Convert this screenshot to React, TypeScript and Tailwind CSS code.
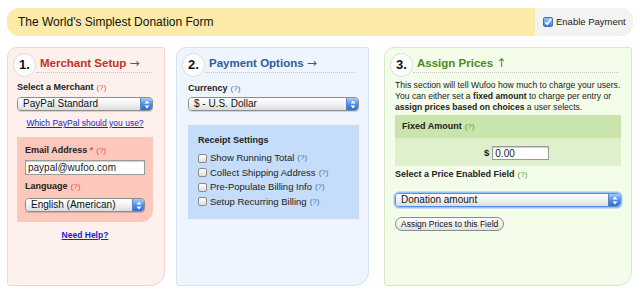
import React from "react";

const font = { fontFamily: '"Liberation Sans", Arial, sans-serif' };

function Arrows() {
  return (
    <svg width="6" height="9" viewBox="0 0 6 9">
      <path d="M3 0.5 L5.5 3.5 L0.5 3.5 Z" fill="#fff" />
      <path d="M3 8.5 L5.5 5.5 L0.5 5.5 Z" fill="#fff" />
    </svg>
  );
}

function Select({ text, focused }: { text: string; focused?: boolean }) {
  return (
    <div
      className={
        "flex h-[14px] w-full items-stretch overflow-hidden rounded-[4px] border " +
        (focused
          ? "border-[#4f8fe0] shadow-[0_0_0_1.5px_#9cc3f5]"
          : "border-[#8d8d8d] shadow-[0_1px_1px_rgba(0,0,0,0.15)]")
      }
    >
      <div className="flex flex-1 items-center bg-gradient-to-b from-white via-[#f2f2f2] to-[#dcdcdc] pl-[5px] text-[10px] leading-none text-[#111]">
        {text}
      </div>
      <div className="flex w-[12px] items-center justify-center border-l border-[#5a86c4] bg-gradient-to-b from-[#a9cdf7] via-[#4f90e6] to-[#2f6fd0]">
        <Arrows />
      </div>
    </div>
  );
}

function Q({ color }: { color: string }) {
  return <span className={"ml-[3px] text-[8px] font-normal " + color}>(?)</span>;
}

function Box() {
  return (
    <span className="mr-[3px] inline-block h-[9px] w-[9px] rounded-[2px] border border-[#8c8c8c] bg-gradient-to-b from-white to-[#dedede] align-middle" />
  );
}

function Header({ n, title, arrow, color }: { n: string; title: string; arrow: string; color: string }) {
  return (
    <div className="ml-[5px] mt-[5px] flex items-start">
      <div className="flex h-[24px] w-[23px] shrink-0 items-center justify-center rounded-full border border-[#dcdcdc] bg-white text-[13px] font-bold text-[#111]">
        {n}
      </div>
      <div
        className={
          "mr-[12px] h-[20px] flex-1 border-b border-dotted border-[#c8c8c8] pl-[4px] text-[11.5px] font-bold leading-[20px] " +
          color
        }
      >
        {title} <span className="text-[12px] font-normal" style={{ fontFamily: '"DejaVu Sans", sans-serif' }}>{arrow}</span>
      </div>
    </div>
  );
}

export default function App() {
  return (
    <div className="h-[293px] w-[640px] overflow-hidden bg-white px-[7px] pt-[8px] text-[#222]" style={font}>
      {/* top bar */}
      <div className="flex h-[28px] w-[626px] items-stretch overflow-hidden rounded-[12px] bg-[#fbeaa8]">
        <div className="flex flex-1 items-center pl-[11px] text-[12px] text-[#111]">
          The World's Simplest Donation Form
        </div>
        <div className="flex w-[98px] items-center rounded-r-[12px] bg-[#f3f3f1] pl-[8px] text-[9.5px] text-[#222]">
          <span className="mr-[3px] flex h-[10px] w-[10px] items-center justify-center rounded-[2px] border border-[#3f6fb5] bg-gradient-to-b from-[#9cc6f7] to-[#3d7fdc]">
            <svg width="8" height="8" viewBox="0 0 8 8">
              <path d="M1.2 4.2 L3.2 6.3 L7 0.8" stroke="#fff" strokeWidth="1.6" fill="none" />
            </svg>
          </span>
          Enable Payment
        </div>
      </div>

      {/* panels */}
      <div className="mt-[11px] flex items-start">
        {/* panel 1 */}
        <div className="h-[239px] w-[158px] rounded-bl-[3px] rounded-br-[14px] rounded-tl-[10px] rounded-tr-[3px] border border-[#f2d4cc] bg-[#fdf0ed]">
          <Header n="1." title="Merchant Setup" arrow="→" color="text-[#c3321a]" />
          <div className="pl-[9px] pr-[11px]">
            <div className="mt-[4px] text-[9px] font-bold leading-[12px]">
              Select a Merchant<Q color="text-[#d9534f]" />
            </div>
            <div className="mt-[3px]">
              <Select text="PayPal Standard" />
            </div>
            <div className="mt-[6px] text-center text-[8.5px] leading-[12px] text-[#2222cc] underline">
              Which PayPal should you use?
            </div>
            <div className="mt-[8px] h-[85px] rounded-br-[12px] bg-[#fbc8bb] px-[8px] pt-[7px]">
              <div className="text-[9px] font-bold leading-[12px]">
                Email Address <span className="text-[#d9534f]">*</span>
                <Q color="text-[#d9534f]" />
              </div>
              <div className="mt-[3px] flex h-[15px] items-center border border-[#9a9a9a] bg-white pl-[2px] text-[10px] shadow-[inset_0_1px_1px_rgba(0,0,0,0.2)]">
                paypal@wufoo.com
              </div>
              <div className="mt-[5px] text-[9px] font-bold leading-[12px]">
                Language<Q color="text-[#d9534f]" />
              </div>
              <div className="mt-[5px]">
                <Select text="English (American)" />
              </div>
            </div>
            <div className="mt-[7px] text-center text-[8.5px] font-bold leading-[12px] text-[#2222cc] underline">
              Need Help?
            </div>
          </div>
        </div>

        {/* panel 2 */}
        <div className="ml-[11px] h-[239px] w-[193px] rounded-bl-[3px] rounded-br-[14px] rounded-tl-[10px] rounded-tr-[3px] border border-[#d5e2ef] bg-[#eef5fe]">
          <Header n="2." title="Payment Options" arrow="→" color="text-[#2f5d9a]" />
          <div className="pl-[11px] pr-[9px]">
            <div className="mt-[5px] text-[9px] font-bold leading-[12px]">
              Currency<Q color="text-[#4a72b0]" />
            </div>
            <div className="mt-[2px]">
              <Select text="$ - U.S. Dollar" />
            </div>
            <div className="mt-[14px] h-[94px] bg-[#c5ddfa] pl-[10px] pt-[9px]">
              <div className="text-[9px] font-bold leading-[12px]">Receipt Settings</div>
              <div className="mt-[5px] text-[9.5px] leading-[14.5px]">
                <div className="flex items-center">
                  <Box />Show Running Total<Q color="text-[#4a72b0]" />
                </div>
                <div className="flex items-center">
                  <Box />Collect Shipping Address<Q color="text-[#4a72b0]" />
                </div>
                <div className="flex items-center">
                  <Box />Pre-Populate Billing Info<Q color="text-[#4a72b0]" />
                </div>
                <div className="flex items-center">
                  <Box />Setup Recurring Billing<Q color="text-[#4a72b0]" />
                </div>
              </div>
            </div>
          </div>
        </div>

        {/* panel 3 */}
        <div className="ml-[15px] h-[239px] w-[248px] rounded-bl-[3px] rounded-br-[14px] rounded-tl-[10px] rounded-tr-[3px] border border-[#d8eac9] bg-[#f4fcea]">
          <Header n="3." title="Assign Prices" arrow="↑" color="text-[#4b8b20]" />
          <div className="pl-[10px] pr-[10px]">
            <div className="mt-[3px] whitespace-nowrap text-[8.6px] leading-[11px] text-[#222]">
              This section will tell Wufoo how much to charge your users.
              <br />
              You can either set a <b>fixed amount</b> to charge per entry or
              <br />
              <b>assign prices based on choices</b> a user selects.
            </div>
            <div className="mt-[2px] h-[51px] bg-[#def0cc]">
              <div className="flex h-[23px] items-center bg-[#c9e4ac] pl-[7px] text-[9px] font-bold">
                Fixed Amount<Q color="text-[#5f9e2c]" />
              </div>
              <div className="flex items-center pl-[89px] pt-[8px]">
                <span className="mr-[3px] text-[9.5px] font-bold">$</span>
                <div className="flex h-[14px] w-[57px] items-center border border-[#9a9a9a] bg-white pl-[2px] text-[10px] shadow-[inset_0_1px_1px_rgba(0,0,0,0.2)]">
                  0.00
                </div>
              </div>
            </div>
            <div className="mt-[2px] text-[9px] font-bold leading-[12px]">
              Select a Price Enabled Field<Q color="text-[#5f9e2c]" />
            </div>
            <div className="mt-[12px]">
              <Select text="Donation amount" focused />
            </div>
            <div className="mt-[10px] flex">
              <div className="flex h-[14px] items-center rounded-full border border-[#8a8a8a] bg-gradient-to-b from-white to-[#e2e2e2] px-[5px] text-[8.5px] text-[#111]">
                Assign Prices to this Field
              </div>
            </div>
          </div>
        </div>
      </div>
    </div>
  );
}
